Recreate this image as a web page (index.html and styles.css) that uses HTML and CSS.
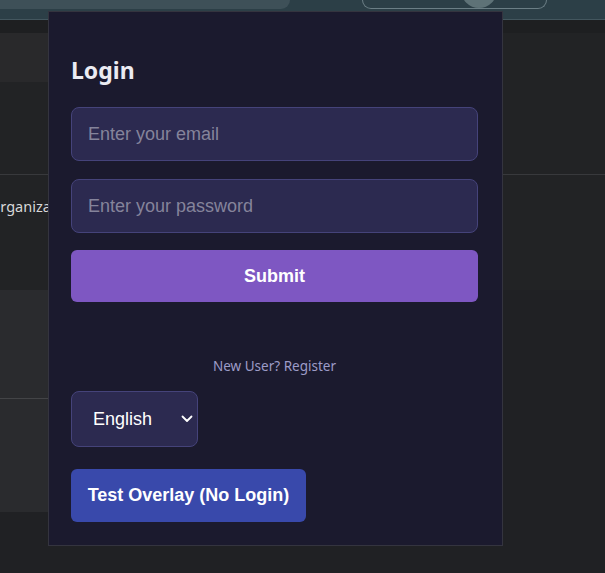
FILE: index.html
```html
<!DOCTYPE html>
<html>
<head>
<meta charset="utf-8">
<link rel="stylesheet" href="styles.css">
</head>
<body>
<div class="toolbar">
  <div class="tabshape"></div>
  <div class="omnibox"><div class="knob"></div></div>
</div>
<div class="page">
  <div class="r1"></div>
  <div class="r2"><div class="r2-left"></div></div>
  <div class="r3"></div>
  <div class="r4"><span class="orgtext">Organization</span></div>
  <div class="r5"></div>
  <div class="r6"></div>
  <div class="r7"></div>
</div>

<div class="popup">
  <h2 class="title">Login</h2>
  <input class="field" type="email" placeholder="Enter your email">
  <input class="field field2" type="password" placeholder="Enter your password">
  <button class="submit">Submit</button>
  <div class="register">New User? Register</div>
  <div class="langwrap">
    <select class="lang"><option>English</option></select>
    <svg class="chev" width="12" height="8" viewBox="0 0 12 8"><path d="M1.5 1.5 L6 6 L10.5 1.5" fill="none" stroke="#ffffff" stroke-width="1.8" stroke-linecap="round" stroke-linejoin="round"/></svg>
  </div>
  <button class="test">Test Overlay (No Login)</button>
</div>
</body>
</html>
```
FILE: styles.css
```css
html, body {
  margin: 0;
  padding: 0;
  background: #202124;
  overflow: hidden;
}
body {
  width: 605px;
  height: 573px;
  position: relative;
  font-family: "Liberation Sans", Arial, sans-serif;
}
.toolbar {
  height: 19px;
  background: #2c3f47;
  border-bottom: 1px solid #43565e;
  display: flex;
  align-items: flex-start;
}
.tabshape {
  width: 290px;
  height: 9px;
  background: #3e5058;
  border-bottom-right-radius: 12px;
}
.omnibox {
  margin-left: 72px;
  width: 183px;
  height: 8px;
  border: 1px solid #6b7e85;
  border-top: none;
  border-radius: 0 0 12px 12px;
  display: flex;
  justify-content: flex-start;
  overflow: hidden;
}
.knob {
  margin-left: 98px;
  margin-top: -28px;
  width: 36px;
  height: 36px;
  border-radius: 50%;
  background: #5e7277;
}
.page { display: flex; flex-direction: column; }
.r1 { height: 13px; background: #1e1f21; }
.r2 { height: 49px; background: #222325; }
.r2-left { width: 60px; height: 49px; background: #29292b; }
.r3 { height: 92px; background: #222325; border-bottom: 1px solid #38393c; }
.r4 {
  height: 115px;
  background: #222325;
  display: flex;
  align-items: flex-start;
  overflow: hidden;
}
.orgtext {
  margin-left: -11px;
  margin-top: 21px;
  font-family: "Noto Sans", "Open Sans", sans-serif;
  font-size: 14.5px;
  color: #d8d8d8;
  white-space: nowrap;
}
.r5 { width: 300px; height: 108px; background: #2a2b2e; border-bottom: 1px solid #434447; }
.r6 { width: 300px; height: 113px; background: #2a2b2e; }
.r7 { height: 61px; background: #202124; }

.popup {
  position: absolute;
  left: 48px;
  top: 11px;
  width: 407px;
  padding: 0 24px 23px 22px;
  background: #1b1a2e;
  border: 1px solid #34343f;
  display: flex;
  flex-direction: column;
  align-items: flex-start;
}
.title {
  margin: 42px 0 0 0;
  height: 32px;
  line-height: 32px;
  font-family: "Noto Sans", "Open Sans", sans-serif;
  font-weight: 700;
  font-size: 23px;
  color: #ebebf2;
}
.field {
  box-sizing: border-box;
  margin: 21px 0 0 0;
  width: 407px;
  height: 54px;
  padding: 0 16px;
  background: #2c2a50;
  border: 1px solid #45437a;
  border-radius: 8px;
  color: #ffffff;
  font-family: "Liberation Sans", Arial, sans-serif;
  font-size: 18px;
  outline: none;
}
.field::placeholder { color: #85849b; }
.field2 { margin-top: 18px; }
.submit {
  margin-top: 17px;
  width: 407px;
  height: 52px;
  border: none;
  border-radius: 6px;
  background: #7e57c2;
  color: #ffffff;
  font-family: "Liberation Sans", Arial, sans-serif;
  font-weight: 700;
  font-size: 18px;
}
.register {
  align-self: center;
  margin-top: 54px;
  height: 20px;
  line-height: 20px;
  font-family: "Noto Sans", "Open Sans", sans-serif;
  font-size: 13.5px;
  color: #9d9cc8;
  margin-left: 0;
}
.langwrap {
  position: relative;
  margin-top: 15px;
}
.lang {
  box-sizing: border-box;
  width: 127px;
  height: 56px;
  padding: 0 0 0 21px;
  background: #2c2a50;
  border: 1px solid #45437a;
  border-radius: 8px;
  color: #ffffff;
  font-family: "Liberation Sans", Arial, sans-serif;
  font-size: 18px;
  appearance: none;
  -webkit-appearance: none;
  outline: none;
}
.chev {
  position: absolute;
  left: 110px;
  top: 24px;
}
.test {
  margin-top: 22px;
  width: 235px;
  height: 53px;
  border: none;
  border-radius: 6px;
  background: #3949ab;
  color: #ffffff;
  font-family: "Liberation Sans", Arial, sans-serif;
  font-weight: 700;
  font-size: 18px;
  padding: 0;
}
```
